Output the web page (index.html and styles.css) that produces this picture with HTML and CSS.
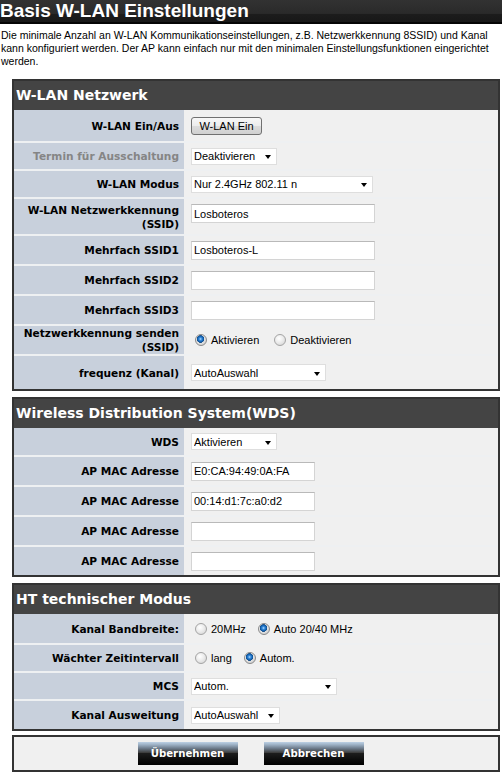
FILE: index.html
```html
<!DOCTYPE html>
<html lang="de">
<head>
<meta charset="utf-8">
<title>Basis W-LAN Einstellungen</title>
<link rel="stylesheet" href="styles.css">
</head>
<body>
<div class="titlebar"><h1>Basis W-LAN Einstellungen</h1></div>
<p class="intro">Die minimale Anzahl an W-LAN Kommunikationseinstellungen, z.B. Netzwerkkennung 8SSID) und Kanal<br>kann konfiguriert werden. Der AP kann einfach nur mit den minimalen Einstellungsfunktionen eingerichtet<br>werden.</p>

<form class="settings">
  <section class="panel">
    <h2 class="panel-head">W-LAN Netzwerk</h2>
    <div class="row h31">
      <div class="lab">W-LAN Ein/Aus</div>
      <div class="val"><button type="button" class="btn-toggle">W-LAN Ein</button></div>
    </div>
    <div class="row h26">
      <div class="lab muted">Termin für Ausschaltung</div>
      <div class="val"><span class="selwrap"><select class="sel w86"><option>Deaktivieren</option></select></span></div>
    </div>
    <div class="row h26">
      <div class="lab">W-LAN Modus</div>
      <div class="val"><span class="selwrap"><select class="sel w182"><option>Nur 2.4GHz 802.11 n</option></select></span></div>
    </div>
    <div class="row h35">
      <div class="lab">W-LAN Netzwerkkennung (SSID)</div>
      <div class="val raised"><input type="text" class="txt w184" value="Losboteros"></div>
    </div>
    <div class="row h28">
      <div class="lab">Mehrfach SSID1</div>
      <div class="val"><input type="text" class="txt w184" value="Losboteros-L"></div>
    </div>
    <div class="row h28">
      <div class="lab">Mehrfach SSID2</div>
      <div class="val"><input type="text" class="txt w184" value=""></div>
    </div>
    <div class="row h28">
      <div class="lab">Mehrfach SSID3</div>
      <div class="val"><input type="text" class="txt w184" value=""></div>
    </div>
    <div class="row h28">
      <div class="lab">Netzwerkkennung senden (SSID)</div>
      <div class="val">
        <label class="opt wide"><input type="radio" name="bcast" checked>Aktivieren</label>
        <label class="opt"><input type="radio" name="bcast">Deaktivieren</label>
      </div>
    </div>
    <div class="row h33">
      <div class="lab">frequenz (Kanal)</div>
      <div class="val"><span class="selwrap"><select class="sel w135"><option>AutoAuswahl</option></select></span></div>
    </div>
  </section>

  <section class="panel">
    <h2 class="panel-head">Wireless Distribution System(WDS)</h2>
    <div class="row h27">
      <div class="lab">WDS</div>
      <div class="val"><span class="selwrap"><select class="sel w86"><option>Aktivieren</option></select></span></div>
    </div>
    <div class="row h28">
      <div class="lab">AP MAC Adresse</div>
      <div class="val"><input type="text" class="txt w124" value="E0:CA:94:49:0A:FA"></div>
    </div>
    <div class="row h28">
      <div class="lab">AP MAC Adresse</div>
      <div class="val"><input type="text" class="txt w124" value="00:14:d1:7c:a0:d2"></div>
    </div>
    <div class="row h28">
      <div class="lab">AP MAC Adresse</div>
      <div class="val"><input type="text" class="txt w124" value=""></div>
    </div>
    <div class="row h28">
      <div class="lab">AP MAC Adresse</div>
      <div class="val"><input type="text" class="txt w124" value=""></div>
    </div>
  </section>

  <section class="panel">
    <h2 class="panel-head">HT technischer Modus</h2>
    <div class="row h29">
      <div class="lab">Kanal Bandbreite:</div>
      <div class="val">
        <label class="opt"><input type="radio" name="bw">20MHz</label>
        <label class="opt"><input type="radio" name="bw" checked>Auto 20/40 MHz</label>
      </div>
    </div>
    <div class="row h26">
      <div class="lab">Wächter Zeitintervall</div>
      <div class="val">
        <label class="opt"><input type="radio" name="gi">lang</label>
        <label class="opt"><input type="radio" name="gi" checked>Autom.</label>
      </div>
    </div>
    <div class="row h26">
      <div class="lab">MCS</div>
      <div class="val"><span class="selwrap"><select class="sel w146"><option>Autom.</option></select></span></div>
    </div>
    <div class="row h28">
      <div class="lab">Kanal Ausweitung</div>
      <div class="val"><span class="selwrap"><select class="sel w89"><option>AutoAuswahl</option></select></span></div>
    </div>
  </section>

  <div class="panel actions">
    <button type="submit" class="btn-dark">Übernehmen</button>
    <button type="reset" class="btn-dark">Abbrechen</button>
  </div>
</form>
</body>
</html>
```
FILE: styles.css
```css
html, body {
  margin: 0;
  padding: 0;
  background: #fff;
}

body {
  font-family: "Liberation Sans", Arial, sans-serif;
  font-size: 11px;
  color: #000;
}

/* page title strip */
.titlebar {
  height: 24px;
  background: linear-gradient(to bottom, #323232 0, #2a2a2a 56%, #1c1c1c 60%, #181818 90%, #050505 92%, #050505 100%);
  overflow: hidden;
}

.titlebar h1 {
  margin: 0;
  font: bold 19px/22px "Liberation Sans", Arial, sans-serif;
  color: #fff;
  white-space: nowrap;
}

.intro {
  margin: 5px 0 11px;
  padding-left: 1px;
  font-size: 10.5px;
  line-height: 13px;
  white-space: nowrap;
}

/* settings panels */
.panel {
  margin: 0 2px 6px 12px;
  border: 2px solid #333;
  background: #f0f0f0;
}

.panel-head {
  margin: 0;
  height: 29px;
  padding-left: 2px;
  background: #444;
  color: #fff;
  font: bold 14px/29px "DejaVu Sans", Verdana, sans-serif;
  white-space: nowrap;
}

.row {
  display: grid;
  grid-template-columns: 170px 1fr;
}

.row + .row {
  border-top: 2px solid #eef0f2;
}

.h26 { height: 26px; }
.h27 { height: 27px; }
.h28 { height: 28px; }
.h29 { height: 29px; }
.h31 { height: 31px; }
.h33 { height: 33px; }
.h35 { height: 35px; }

.lab {
  display: flex;
  align-items: center;
  justify-content: flex-end;
  padding: 0 5px 0 8px;
  background: #c8d0dc;
  text-align: right;
  font: bold 10.6px/14px "DejaVu Sans", Verdana, sans-serif;
  color: #000;
}

.lab.muted {
  color: #858585;
}

.val {
  display: flex;
  align-items: center;
  padding-left: 7px;
}

.val.raised {
  padding-bottom: 6px;
}

/* form controls */
.btn-toggle {
  box-sizing: border-box;
  width: 71px;
  height: 18px;
  margin: 0;
  padding: 0;
  border: 1px solid #707070;
  border-radius: 3px;
  background: linear-gradient(to bottom, #f7f7f7 0, #ececec 50%, #dcdcdc 51%, #d0d0d0 100%);
  font: 11px "Liberation Sans", Arial, sans-serif;
  color: #000;
}

.selwrap {
  position: relative;
  display: inline-block;
}

.selwrap::after {
  content: "";
  position: absolute;
  right: 6px;
  top: 50%;
  margin-top: -1px;
  border-left: 3.5px solid transparent;
  border-right: 3.5px solid transparent;
  border-top: 4px solid #000;
  pointer-events: none;
}

.sel {
  -webkit-appearance: none;
  appearance: none;
  box-sizing: border-box;
  display: block;
  height: 17px;
  margin: 0;
  padding: 0 14px 0 2px;
  border: 1px solid #dedede;
  border-radius: 0;
  background: #fff;
  font: 11px "Liberation Sans", Arial, sans-serif;
  color: #000;
}

.txt {
  box-sizing: border-box;
  height: 19px;
  margin: 0;
  padding: 0 2px;
  border: 1px solid #d4d4d4;
  border-top-color: #b9b9b9;
  background: #fff;
  font: 11px "Liberation Sans", Arial, sans-serif;
  color: #000;
  outline: none;
}

.w86 { width: 86px; }
.w89 { width: 89px; }
.w124 { width: 124px; }
.w135 { width: 135px; }
.w146 { width: 146px; }
.w182 { width: 182px; }
.w184 { width: 184px; }

.opt {
  display: inline-flex;
  align-items: center;
  margin-left: 4px;
  margin-right: 8px;
  font: 11px "Liberation Sans", Arial, sans-serif;
}

.opt.wide {
  margin-right: 11px;
}

.opt input {
  -webkit-appearance: none;
  appearance: none;
  box-sizing: border-box;
  width: 12px;
  height: 12px;
  margin: 0 4px 0 0;
  border: 1px solid #a4a4a4;
  border-radius: 50%;
  background: radial-gradient(circle at 40% 35%, #ffffff 0, #ececec 45%, #cfcfcf 100%);
}

.opt input:checked {
  border-color: #8a8a8a;
  background:
    radial-gradient(circle at 45% 40%, #bfe4ff 0, #3b8fe0 1.3px, #0d5aa8 3px, #1a4f86 3.6px, rgba(0,0,0,0) 4px),
    radial-gradient(circle at 40% 35%, #ffffff 0, #e6e6e6 45%, #c4c4c4 100%);
}

/* apply / cancel strip */
.actions {
  display: flex;
  justify-content: center;
  gap: 26px;
  height: 23px;
  padding: 5px 11px 5px 0;
  margin-bottom: 0;
  margin-top: -2px;
}

.btn-dark {
  width: 100px;
  height: 23px;
  margin: 0;
  padding: 0;
  border: 0;
  background: linear-gradient(to bottom, #bcd0e4 0, #9cb0c4 12%, #6c7a8a 28%, #3e3e3e 46%, #1c1c1c 50%, #0a0a0a 80%, #000 100%);
  color: #fff;
  font: bold 10.2px "DejaVu Sans", Verdana, sans-serif;
}
```
